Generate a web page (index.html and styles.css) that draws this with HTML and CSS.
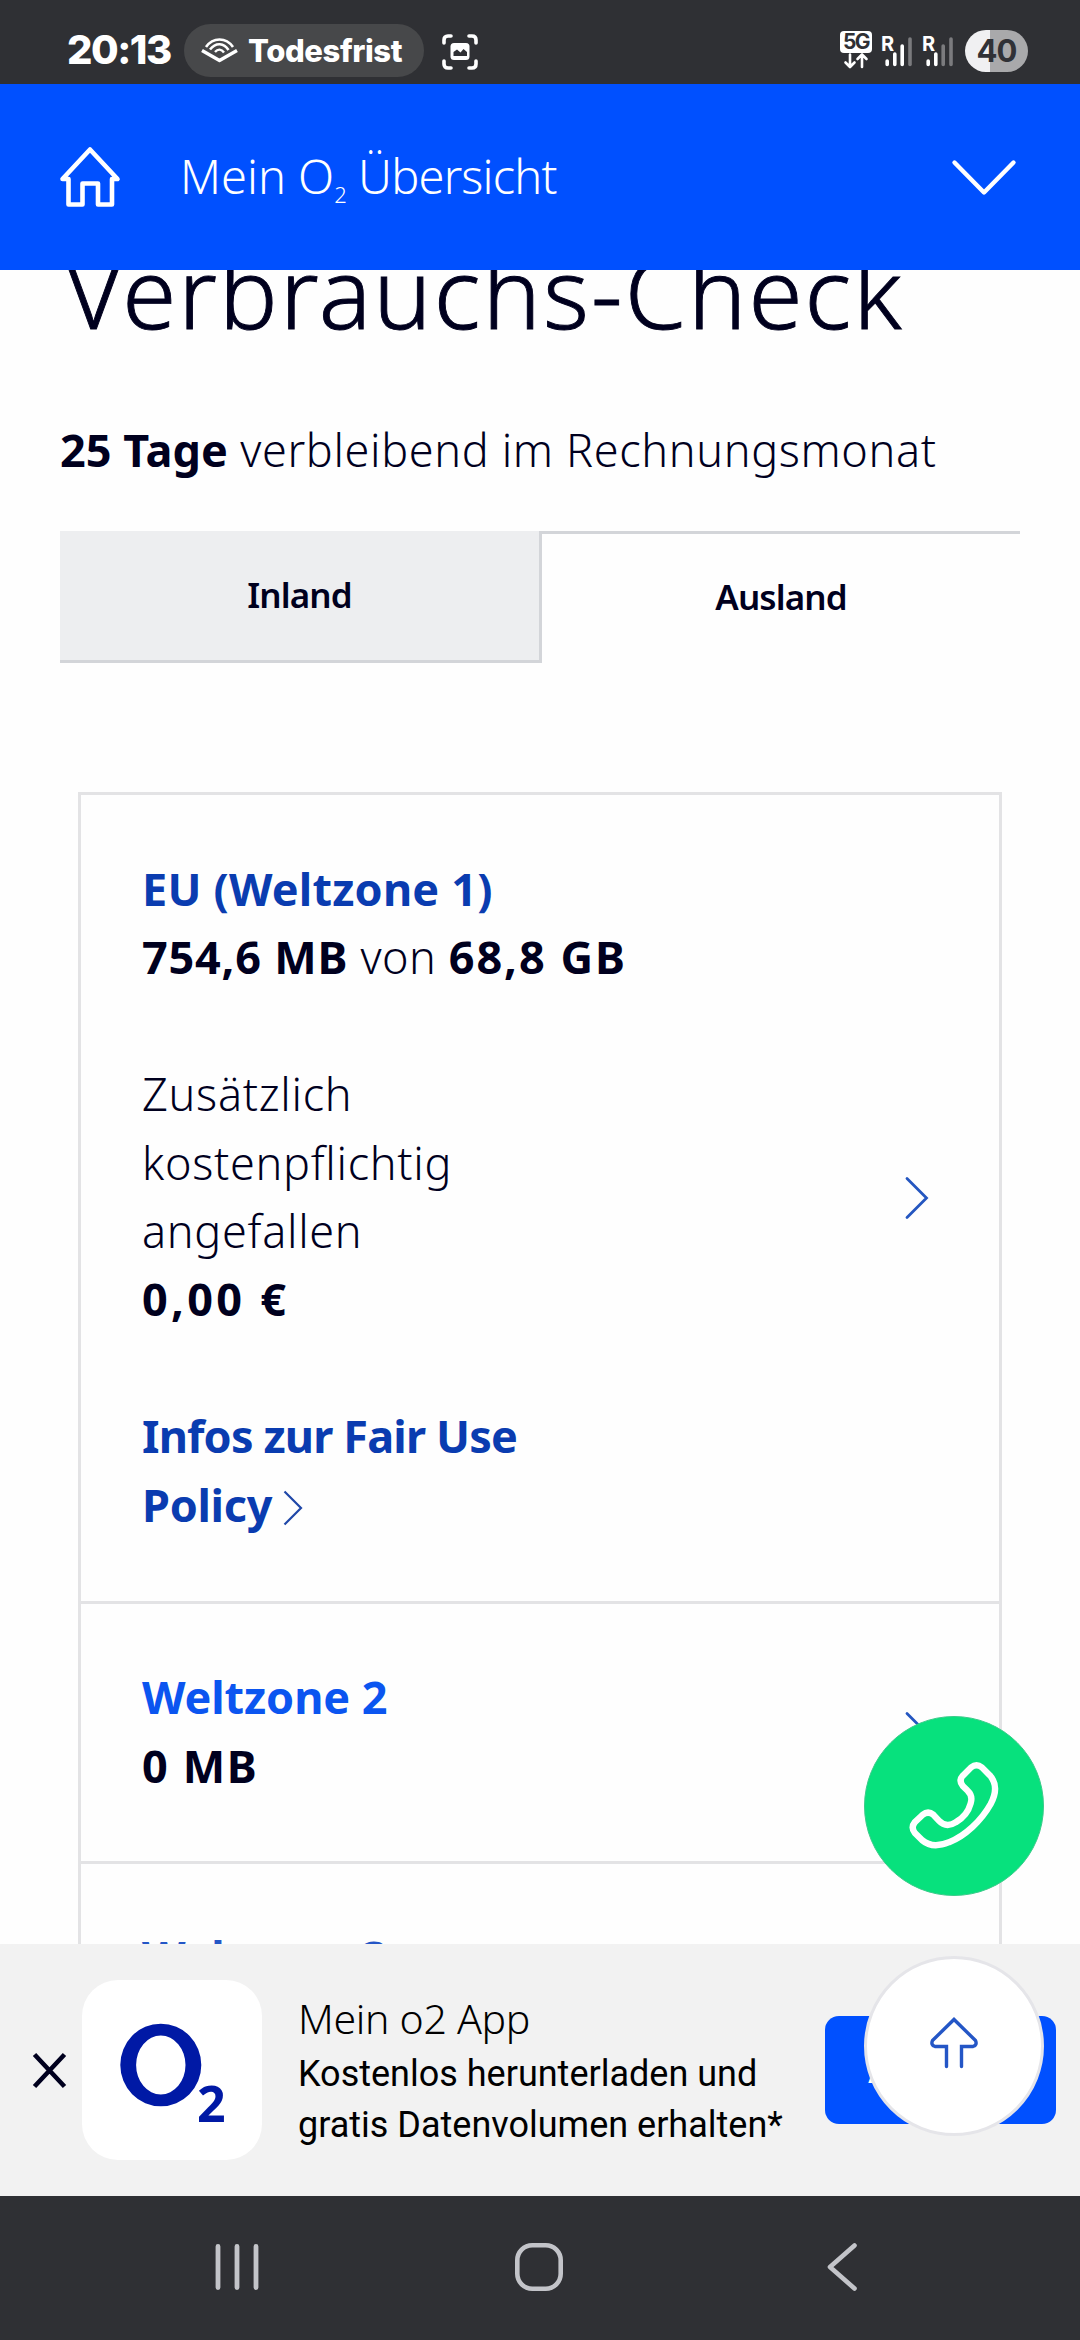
FILE: index.html
```
<!DOCTYPE html>
<html lang="de">
<head>
<meta charset="utf-8">
<title>Mein O2 Übersicht</title>
<link rel="stylesheet" href="styles.css">
</head>
<body>
<div class="screen">
  <div class="status">
    <span class="clock">20:13</span>
    <span class="pill">
      <svg class="pill-icon" width="37" height="25" viewBox="0 0 37 25" fill="none" stroke="#fff" stroke-linejoin="round">
        <path d="M1 12.500L18.500 22.500L36 12.500" stroke-width="3.400"/>
        <path d="M5 9C12-1 25-1 32 9" stroke-width="2.600"/>
        <path d="M9 11.500C15 4 23 5 27.500 12" stroke-width="2.600"/>
        <path d="M14 14C17 10.500 20.500 11 23 14.500" stroke-width="2.400"/>
      </svg>
      <span>Todesfrist</span>
    </span>
    <svg class="capture" width="36" height="36" viewBox="0 0 36 36" fill="none">
      <path d="M2 9V6Q2 2 6 2H9M27 2H30Q34 2 34 6V9M34 27V30Q34 34 30 34H27M9 34H6Q2 34 2 30V27" stroke="#fff" stroke-width="3.600" stroke-linecap="round"/>
      <rect x="8.500" y="9" width="19" height="17" rx="3.500" fill="#fff"/>
      <path d="M11.500 22V18L15 15.500L18.500 18.500L21.500 15L25 18V22Z" fill="#2f3034"/>
    </svg>
    <span class="network">
      <span class="badge">5G</span>
      <svg width="32" height="16" viewBox="0 0 32 16" fill="none" stroke="#fff" stroke-width="2.600" stroke-linecap="round" stroke-linejoin="round">
        <path d="M10 1.500V13.500M5.500 9.500L10 14L14.500 9.500M22 14V2.500M17.500 6L22 1.500L26.500 6"/>
      </svg>
    </span>
    <svg class="signal" width="31" height="36" viewBox="0 0 31 36" stroke-width="3.600" stroke-linecap="round">
      <text class="roam" x="-1" y="14.500">R</text>
      <path d="M5.200 25V28.500M12.800 18V28.500M20.200 10V28.500" stroke="#fff"/>
      <path d="M28 3V28.500" stroke="#7b7b7e"/>
    </svg>
    <svg class="signal second" width="31" height="36" viewBox="0 0 31 36" stroke-width="3.600" stroke-linecap="round">
      <text class="roam" x="-1" y="14.500">R</text>
      <path d="M5.200 25V28.500M12.800 18V28.500" stroke="#fff"/>
      <path d="M20.200 10V28.500M28 3V28.500" stroke="#7b7b7e"/>
    </svg>
    <span class="battery">40</span>
  </div>

  <header class="header">
    <svg class="home" width="60" height="62" viewBox="0 0 60 62" fill="none" stroke="#fff" stroke-width="4.600" stroke-linejoin="round">
      <path d="M8.500 33H2.500L30 3.500L57.500 33H52V58.500H38V37.500H22.500V58.500H8.500Z"/>
    </svg>
    <span class="title">Mein O<sub>2</sub> <span class="title-end">Übersicht</span></span>
    <svg class="toggle" width="64" height="36" viewBox="0 0 64 36" fill="none" stroke="#fff" stroke-width="4.400" stroke-linecap="round" stroke-linejoin="round">
      <path d="M2.500 3.500L32 33.500L61.500 3.500"/>
    </svg>
  </header>

  <main class="content">
    <h1 class="heading">Verbrauchs-Check</h1>
    <p class="remaining"><b>25 Tage</b> verbleibend im Rechnungsmonat</p>
    <div class="tabs">
      <div class="tab tab-inland">Inland</div>
      <div class="tab tab-ausland">Ausland</div>
    </div>
    <div class="card">
      <div class="row row-eu">
        <div class="row-text">
          <p class="zone zone-dark eu">EU (Weltzone 1)</p>
          <p><b class="used">754,6 MB</b> von <b class="total">68,8 GB</b></p>
          <p class="extra">Zusätzlich kostenpflichtig angefallen</p>
          <p><b class="cost">0,00 €</b></p>
          <p class="zone zone-dark policy">Infos zur Fair Use <span class="policy-end">Policy</span><svg width="20" height="36" viewBox="0 0 20 36" fill="none" stroke="#1f47a8" stroke-width="2.200"><path d="M1.500 1.500L18 18L1.500 34.500"/></svg></p>
        </div>
        <svg class="arrow" width="24" height="42" viewBox="0 0 24 42"><path d="M2 1.500L21.500 21L2 40.500"/></svg>
      </div>
      <div class="row row-zone">
        <div class="row-text">
          <p class="zone">Weltzone 2</p>
          <p><b class="zero">0 MB</b></p>
        </div>
        <svg class="arrow" width="24" height="42" viewBox="0 0 24 42"><path d="M2 1.500L21.500 21L2 40.500"/></svg>
      </div>
      <div class="row row-zone">
        <div class="row-text">
          <p class="zone zone-muted">Weltzone 3</p>
        </div>
      </div>
    </div>
  </main>

  <aside class="banner">
    <svg class="close" width="33" height="35" viewBox="0 0 33 35" fill="none" stroke="#00001e" stroke-width="4.600"><path d="M1.500 1.500L31.500 33.500M31.500 1.500L1.500 33.500"/></svg>
    <div class="app-tile">
      <svg width="180" height="180" viewBox="0 0 180 180">
        <path fill="#0019a5" fill-rule="evenodd" d="M38.300 85a40.500 41.300 0 1 0 81 0a40.500 41.300 0 1 0-81 0ZM54.100 85a24.700 29.500 0 1 0 49.400 0a24.700 29.500 0 1 0-49.400 0Z"/>
        <text class="logo-two" x="115" y="142">2</text>
      </svg>
    </div>
    <div class="app-text">
      <p class="app-name">Mein o2 App</p>
      <p class="app-info">Kostenlos herunterladen und gratis Datenvolumen erhalten*</p>
    </div>
    <div class="app-button">Ansehen</div>
  </aside>

  <nav class="navbar">
    <svg class="recents" width="44" height="48" viewBox="0 0 44 48" fill="none" stroke="#c3c4c9" stroke-width="4.800" stroke-linecap="round"><path d="M3 3.500V44.500M22 3.500V44.500M41 3.500V44.500"/></svg>
    <svg class="home-key" width="48" height="48" viewBox="0 0 48 48" fill="none" stroke="#c3c4c9" stroke-width="4.600"><rect x="2.300" y="2.300" width="43.400" height="43.400" rx="15"/></svg>
    <svg class="back-key" width="30" height="48" viewBox="0 0 30 48" fill="none" stroke="#c3c4c9" stroke-width="4.600" stroke-linecap="round" stroke-linejoin="round"><path d="M27.500 2.500L3 24L27.500 45.500"/></svg>
  </nav>

  <div class="fab call">
    <svg width="88" height="88" viewBox="0 0 90 90" fill="none" stroke="#fff" stroke-width="6.500" stroke-linejoin="round">
      <path d="M54 14L62.500 5.500Q68 1 73.500 5.500L81.500 13.500Q92 25 82.500 43C73 60 56 76 40 82Q23 89 12.500 80L5 72.500Q0.500 67 5 61.500L13 54Q18.500 49.500 24 54L29.500 60Q37 68 47 61.500C55 57 60 50 62 42.500Q64.500 34.500 59 29.500L54 24.500Q49.500 19 54 14Z"/>
    </svg>
  </div>
  <div class="fab up">
    <svg width="48" height="52" viewBox="0 0 48 52" fill="none" stroke="#2456c6" stroke-width="3.400" stroke-linecap="round">
      <path d="M16.500 49.500V29.500H5Q0.500 28 2.500 23.500L24 2.500L45.500 23.500Q47.500 28 43 29.500H31.500V49.500"/>
    </svg>
  </div>
</div>
</body>
</html>
```
FILE: styles.css
```
* { box-sizing: border-box; }
body { margin: 0; }
p, h1 { margin: 0; }
svg { display: block; flex: none; overflow: visible; }

.screen {
  position: relative;
  display: grid;
  grid-template-rows: 84px 186px 1674px 252px 144px;
  grid-template-columns: 1080px;
  width: 1080px;
  height: 2340px;
  overflow: hidden;
  background: #fefefe;
  font-family: "Noto Sans", sans-serif;
  color: #00001e;
}

/* Status bar */
.status {
  display: flex;
  align-items: flex-start;
  padding-left: 67px;
  background: #2f3034;
  color: #fff;
  font-family: Inter, sans-serif;
}
.clock {
  width: 117px;
  margin-top: 24px;
  font-size: 40px;
  line-height: 52px;
  font-weight: 800;
  letter-spacing: -1.5px;
  white-space: nowrap;
}
.pill {
  display: flex;
  align-items: center;
  gap: 10px;
  width: 240px;
  height: 53px;
  margin-top: 24px;
  padding-left: 17px;
  border-radius: 27px;
  background: #47484a;
  font-size: 31px;
  font-weight: 800;
  letter-spacing: -0.4px;
}
.capture { margin: 34px 0 0 18px; }
.network { margin: 31px 0 0 362px; }
.badge {
  display: block;
  width: 32px;
  height: 22px;
  border-radius: 4px;
  background: #fff;
  color: #2f3034;
  font-size: 21px;
  line-height: 22px;
  font-weight: 700;
  letter-spacing: -1.5px;
  text-align: center;
}
.signal { margin: 36px 0 0 10px; }
.second { margin-left: 10px; }
.roam { fill: #fff; font: 700 20px Inter, sans-serif; }
.battery {
  width: 63px;
  height: 42px;
  margin: 30px 0 0 11px;
  border-radius: 21px;
  background: linear-gradient(90deg, #f0f0f2 40%, #a9a9ab 40%);
  color: #303136;
  font-size: 31px;
  line-height: 42px;
  font-weight: 700;
  letter-spacing: -1px;
  text-align: center;
}

/* Page header */
.header {
  display: flex;
  align-items: center;
  padding: 0 64px 0 60px;
  background: #0050ff;
  color: #fff;
}
.title {
  flex: 1;
  margin: -3px 0 0 60px;
  font-size: 47px;
  line-height: 70px;
  font-weight: 300;
  white-space: nowrap;
}
.title sub {
  font-size: 22px;
  line-height: 0;
  vertical-align: -9px;
}
.title-end { margin-left: -1px; letter-spacing: -0.8px; }

/* Content */
.content {
  padding: 0 60px;
  overflow: hidden;
}
.heading {
  margin-top: -34px;
  padding-left: 5px;
  font-size: 98px;
  line-height: 110px;
  font-weight: 300;
  letter-spacing: 2.1px;
  white-space: nowrap;
  -webkit-text-stroke: 0.9px #00001e;
}
.remaining {
  margin-top: 70px;
  font-size: 45px;
  line-height: 68px;
  font-weight: 300;
  letter-spacing: 0.65px;
  white-space: nowrap;
}
.remaining b { letter-spacing: 0; }
b { font-weight: 700; }
.tabs {
  display: grid;
  grid-template-columns: 482px 478px;
  height: 132px;
  margin-top: 47px;
}
.tab {
  display: flex;
  align-items: center;
  justify-content: center;
  font-size: 35px;
  font-weight: 600;
  letter-spacing: -0.9px;
}
.tab-inland {
  padding-bottom: 3px;
  border: solid #d3d5d9;
  border-width: 0 3px 3px 0;
  background: #edeef0;
}
.tab-ausland {
  padding-bottom: 4px;
  border-top: 3px solid #d3d5d9;
}

.card {
  width: 924px;
  margin: 129px 0 0 18px;
  border: 3px solid #e3e3e5;
}
.row {
  display: flex;
  align-items: center;
  justify-content: space-between;
  padding: 0 70px 2px 61px;
  font-size: 45px;
  line-height: 68.4px;
  font-weight: 300;
  letter-spacing: 0.5px;
}
.row + .row { border-top: 3px solid #e3e3e5; }
.row-eu { height: 806px; }
.row-zone { height: 260px; }
.row-text { width: 500px; }
.row-text p { white-space: nowrap; }
.row-text .zone { color: #0b55f0; font-weight: 700; letter-spacing: -0.1px; }
.row-text .zone-dark { color: #0a3cb0; }
.row-text .eu { letter-spacing: 0.2px; }
.row-text .zone-muted { margin-bottom: 68.4px; color: #2456c6; }
.used { letter-spacing: 0.8px; }
.total { letter-spacing: 2px; }
.zero { letter-spacing: 1.6px; }
.cost { letter-spacing: 3.3px; }
.row-text .extra {
  width: 330px;
  margin-top: 68.4px;
  letter-spacing: 0.7px;
  white-space: normal;
}
.row-text .policy {
  width: 400px;
  margin-top: 68.4px;
  letter-spacing: -0.85px;
  white-space: normal;
}
.policy-end { letter-spacing: -0.3px; }
.policy svg {
  display: inline-block;
  margin-left: 11px;
  vertical-align: -4px;
}
.arrow {
  margin-top: 2px;
  fill: none;
  stroke: #2456c0;
  stroke-width: 2.8;
  stroke-linecap: round;
}

/* App banner */
.banner {
  display: flex;
  align-items: center;
  padding: 0 24px 0 33px;
  background: #f2f2f2;
  color: #000;
}
.app-tile {
  width: 180px;
  height: 180px;
  margin-left: 16px;
  border-radius: 36px;
  background: #fff;
}
.logo-two { fill: #0019a5; font: 700 50px "Noto Sans", sans-serif; }
.app-text {
  flex: 1;
  margin: 0 0 0 36px;
}
.app-name {
  font-size: 41px;
  line-height: 56px;
  font-weight: 300;
  letter-spacing: -0.3px;
  padding-bottom: 3px;
}
.app-info {
  width: 500px;
  font-family: Roboto, sans-serif;
  font-size: 36px;
  line-height: 51px;
}
.app-button {
  width: 231px;
  height: 108px;
  border-radius: 14px;
  background: #0050ff;
  color: #fff;
  font-size: 34px;
  line-height: 108px;
  font-weight: 600;
  text-align: center;
}

/* System navigation */
.navbar {
  display: flex;
  align-items: center;
  background: #2f3034;
}
.recents { margin: -2px 0 0 215px; }
.home-key { margin: -2px 0 0 256px; }
.back-key { margin: -2px 0 0 264px; }

/* Floating buttons */
.fab {
  position: absolute;
  left: 864px;
  display: flex;
  align-items: center;
  justify-content: center;
  width: 180px;
  height: 180px;
  border-radius: 50%;
}
.call { top: 1716px; background: #07e17d; border: 1px solid #3bcb8a; }
.up { top: 1956px; background: #fff; border: 3px solid #e5e5e9; padding-bottom: 6px; }
```
